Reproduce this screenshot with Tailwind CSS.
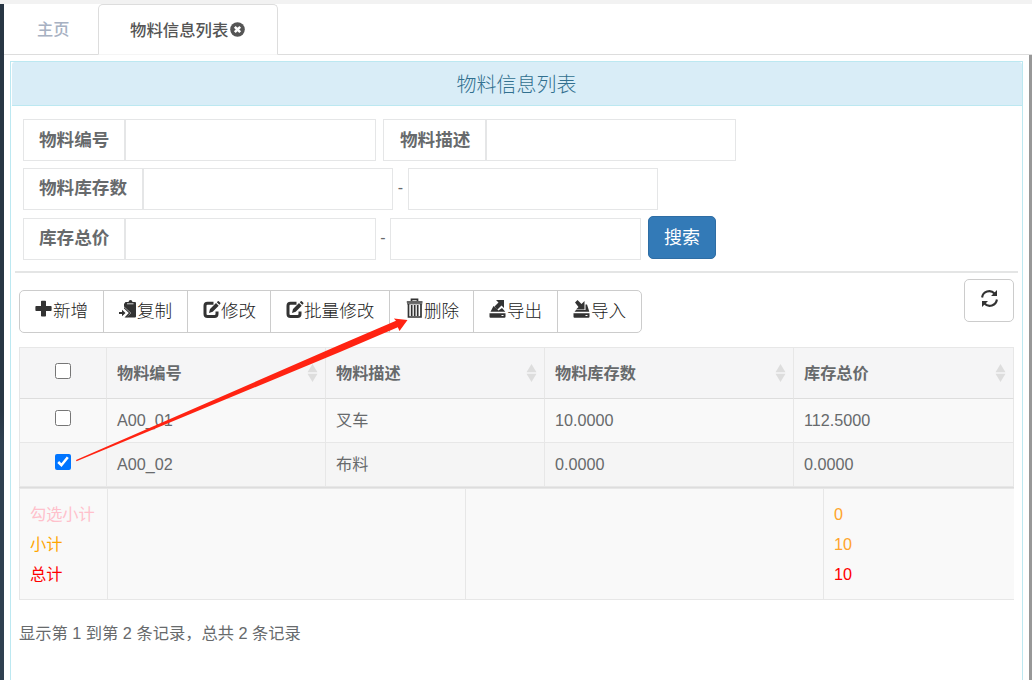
<!DOCTYPE html>
<html lang="zh-CN">
<head>
<meta charset="utf-8">
<title>物料信息列表</title>
<script src="https://cdn.jsdelivr.net/npm/@tailwindcss/browser@4"></script>
</head>
<body class="h-[680px] w-[1032px] overflow-hidden bg-white font-['Liberation_Sans','Noto_Sans_CJK_SC',sans-serif] text-[16.2px] text-[#676a6c]">
<div class="relative flex h-full flex-col">
  <div class="h-1 shrink-0 bg-[#f2f2f2]"></div>
  <div class="flex min-h-0 grow">
    <div class="w-1 shrink-0 bg-linear-to-b from-[#283644] from-60% to-[#2f4050] to-65%"></div>
    <div class="flex min-w-0 grow flex-col">
      <nav class="flex h-[51px] shrink-0 leading-[50px]">
        <div class="w-[94px] border-b border-[#ddd] pl-[33px] font-medium text-[#a7b1c2]">主页</div>
        <div class="flex w-[180px] items-center rounded-t-[5px] border border-[#ddd] border-b-[#f5f5f5] pl-[31px] text-[16.4px] leading-[48px] font-medium text-[#555]">物料信息列表
          <svg class="-mt-px ml-0.5 size-[15px]" viewBox="0 0 15 15"><circle cx="7.5" cy="7.5" r="7.3" fill="#555"/><path d="M4.8 4.8l5.4 5.4M10.2 4.8l-5.4 5.4" stroke="#fff" stroke-width="2.5"/></svg>
        </div>
        <div class="grow border-b border-[#ddd]"></div>
      </nav>
      <div class="flex min-h-0 grow justify-between pl-1.5">
        <main class="mt-1.5 w-[1013px] border border-b-0 border-[#bce8f1] pl-px">
          <h1 class="h-11 rounded-t-[3px] border-b border-[#bce8f1] bg-[#d9edf7] pt-0.5 pr-px text-center text-[20px] leading-[43px] font-light text-[#31708f]">物料信息列表</h1>

          <form class="h-[165px] pt-[13px] pl-[11px] text-[17.6px] leading-[40px]">
            <div class="flex h-[49px]">
              <label class="h-[42px] w-[102px] border border-[#e5e6e7] pl-[15px] font-bold">物料编号</label>
              <input class="h-[42px] w-[251px] border border-[#e5e6e7]">
              <label class="ml-[7px] h-[42px] w-[103px] border border-[#e5e6e7] pl-4 font-bold">物料描述</label>
              <input class="h-[42px] w-[250px] border border-[#e5e6e7]">
            </div>
            <div class="flex h-[50px]">
              <label class="h-[42px] w-[120px] border border-[#e5e6e7] pl-[15px] leading-[38px] font-bold">物料库存数</label>
              <input class="h-[42px] w-[250px] border border-[#e5e6e7]">
              <span class="w-[15px] text-center text-[16px]">-</span>
              <input class="h-[42px] w-[250px] border border-[#e5e6e7]">
            </div>
            <div class="flex">
              <label class="h-[42px] w-[102px] border border-[#e5e6e7] pl-[15px] leading-[38px] font-bold">库存总价</label>
              <input class="h-[42px] w-[251px] border border-[#e5e6e7]">
              <span class="w-[14px] text-center text-[16px]">-</span>
              <input class="h-[42px] w-[251px] border border-[#e5e6e7]">
              <button type="button" class="-mt-0.5 ml-[7px] h-[43px] w-[68px] rounded-[5px] border border-[#2e6da4] bg-[#337ab7] text-[18px] text-white">搜索</button>
            </div>
          </form>
          <div class="mr-1 ml-[3px] h-0.5 bg-[#e4e5e5]"></div>

          <div class="flex justify-between pr-2 pl-[7px]">
            <div class="mt-[17px] flex h-[43px] w-[623px] rounded-[5px] border border-[#ccc] text-[17.6px] leading-[38px] font-light text-[#222] *:flex *:items-center *:border-[#ccc] *:pb-0.5 *:whitespace-nowrap [&_svg]:h-5 [&_svg]:w-[18px] [&_svg]:shrink-0">
              <button class="w-[84px] border-r pl-[15px]"><svg viewBox="0 0 18 20" class="-mt-1" fill="#333"><path d="M6 2.500q0-.8.800-.8h3.400q.8 0 .8.800V7h4.800q.8 0 .8.800v3.400q0 .8-.8.800H11v4.700q0 .8-.8.800H6.800q-.8 0-.8-.8V12H1.200q-.8 0-.8-.8V7.800q0-.8.800-.8H6z"/></svg>新增</button>
              <button class="w-[84px] border-r pl-[15px]"><svg viewBox="0 0 18 20" class="-mt-1" fill="#333"><path d="M8 3h1.500Q9.800 1 11.500 1t2 2H16q1 0 1 1v13.500q0 1-1 1H7.500L12 14 5 7.500V5L6.500 3z"/><path d="M8 4.800h6.500" stroke="#fff" stroke-width=".8"/><path d="M0 13h3V10.800L6.500 14 3 17.200v-2.200H0z"/><path d="M5 8.500l6 5.500-4.500 4.500" fill="none" stroke="#fff"/><path d="M5 9.500l4.800 4.500-4.300 4.500h2.500L11.500 14 5 8z"/></svg>复制</button>
              <button class="w-[83px] border-r pl-[15px]"><svg viewBox="0 0 18 20" class="-mt-0.5"><path d="M10.500 3.200H4.500Q2 3.200 2 5.700V14q0 2.500 2.500 2.500h7Q14 16.500 14 14v-2.500" fill="none" stroke="#333" stroke-width="3"/><path d="M6 13l1-4 6-6 2.700 2.700-6 6zM13.800 2.200l1-1q.5-.5 1 0l1.500 1.500q.5.500 0 1l-1 1z" fill="#333"/></svg>修改</button>
              <button class="w-[119px] border-r pl-[15px]"><svg viewBox="0 0 18 20" class="-mt-0.5"><path d="M10.500 3.200H4.500Q2 3.200 2 5.700V14q0 2.500 2.500 2.500h7Q14 16.500 14 14v-2.500" fill="none" stroke="#333" stroke-width="3"/><path d="M6 13l1-4 6-6 2.700 2.700-6 6zM13.800 2.200l1-1q.5-.5 1 0l1.500 1.500q.5.500 0 1l-1 1z" fill="#333"/></svg>批量修改</button>
              <button class="w-[84px] border-r pl-[16px]"><svg viewBox="0 0 18 20" class="-mt-1.5"><path d="M5.500 3V1.300h6V3M.8 4h15.700M2.500 6v13h12.500V6M5.700 7v11M8.700 7v11M11.700 7v11" fill="none" stroke="#333" stroke-width="1.700"/><path d="M1 5.800h15.300" stroke="#333"/></svg>删除</button>
              <button class="w-[84px] border-r pl-[15px]"><svg viewBox="0 0 18 20" class="-mt-1" fill="#333"><path d="M7 1h8v8l-2.500-2.500-4 4-3-3 4-4zM4.500 7l5 4.500 3.500-2.500 3.300 3.800H1.500zM.5 14.300h16v3.500q0 .9-1 .9h-14q-1 0-1-.9z"/><path d="M12.500 16.500h2" stroke="#fff"/></svg>导出</button>
              <button class="w-[83px] pl-[15px]"><svg viewBox="0 0 18 20" class="-mt-1" fill="#333"><path d="M2 3.500L4.500 1l4 4L11.500 2v8.500H3L5.500 8zM12.500 5.500h1.500l2.300 7.300H1.500L3 11h9.500zM.5 14.300h16v3.500q0 .9-1 .9h-14q-1 0-1-.9z"/><path d="M12.500 16.500h2" stroke="#fff"/></svg>导入</button>
            </div>
            <button class="mt-1.5 flex h-[43px] w-[50px] justify-center rounded-[5px] border border-[#ccc] pt-[9px]">
              <svg class="size-[19px]" viewBox="0 0 19 19"><path d="M2.100 8.500A7.200 7.200 0 0 1 14.500 4.500M16.900 10.500A7.200 7.200 0 0 1 4.500 14.500" fill="none" stroke="#333" stroke-width="2.100"/><path d="M17 1v6h-6zM2 18v-6h6z" fill="#333"/></svg>
            </button>
          </div>

          <section class="mt-[14px] ml-[7px] w-[995px]">
            <table class="w-[995px] table-fixed border-separate border-spacing-0 border-t border-l border-[#e7e7e7] text-left [&_td]:border-r [&_td]:border-b [&_td]:border-[#e7e7e7] [&_td]:pl-2.5 [&_th]:border-r [&_th]:border-b [&_th]:border-r-[#e7e7e7] [&_th]:border-b-[#ddd] [&_th]:pl-2.5">
              <colgroup><col class="w-[87px]"><col class="w-[219px]"><col class="w-[219px]"><col class="w-[249px]"><col></colgroup>
              <thead>
                <tr class="h-[51px] bg-[#f5f5f6]">
                  <th><input type="checkbox" class="mt-[-5px] ml-[25px] block size-4"></th>
                  <th><div class="flex items-center justify-between pr-[7px]">物料编号<svg class="h-5 w-[11px]" viewBox="0 0 11 20" fill="#ddd"><path d="M5.500 1l5 8.300h-10zM.5 10.700h10l-5 8.300z"/></svg></div></th>
                  <th><div class="flex items-center justify-between pr-[7px]">物料描述<svg class="h-5 w-[11px]" viewBox="0 0 11 20" fill="#ddd"><path d="M5.500 1l5 8.300h-10zM.5 10.700h10l-5 8.300z"/></svg></div></th>
                  <th><div class="flex items-center justify-between pr-[7px]">物料库存数<svg class="h-5 w-[11px]" viewBox="0 0 11 20" fill="#ddd"><path d="M5.500 1l5 8.300h-10zM.5 10.700h10l-5 8.300z"/></svg></div></th>
                  <th><div class="flex items-center justify-between pr-[7px]">库存总价<svg class="h-5 w-[11px]" viewBox="0 0 11 20" fill="#ddd"><path d="M5.500 1l5 8.300h-10zM.5 10.700h10l-5 8.300z"/></svg></div></th>
                </tr>
              </thead>
              <tbody>
                <tr class="h-11 bg-[#f9f9f9]"><td><input type="checkbox" class="mt-[-5px] ml-[25px] block size-4"></td><td>A00_01</td><td>叉车</td><td>10.0000</td><td>112.5000</td></tr>
                <tr class="h-11 bg-[#f5f5f5]"><td><input type="checkbox" checked class="mt-[-5px] ml-[25px] block size-4"></td><td>A00_02</td><td>布料</td><td>0.0000</td><td>0.0000</td></tr>
              </tbody>
            </table>
            <div class="h-px bg-[#ddd]"></div>
            <div class="flex h-[112px] border-y border-l border-[#e7e7e7] bg-[#f9f9f9] leading-[30px] *:pt-2.5 *:pl-2.5">
              <div class="w-[88px] border-r border-[#e7e7e7] whitespace-nowrap"><p class="text-[pink]">勾选小计</p><p class="text-[orange]">小计</p><p class="text-[red]">总计</p></div>
              <div class="w-[358px] border-r border-[#e7e7e7]"></div>
              <div class="w-[358px] border-r border-[#e7e7e7]"></div>
              <div><p class="text-[#ffa42c]">0</p><p class="text-[#ffa42c]">10</p><p class="text-[red]">10</p></div>
            </div>
            <p class="mt-[21px] text-[16.25px] leading-6">显示第 1 到第 2 条记录，总共 2 条记录</p>
          </section>
        </main>
        <div class="w-[3px] bg-[#989898]"></div>
      </div>
    </div>
  </div>
  <svg class="absolute inset-0 h-[680px] w-[1032px]" viewBox="0 0 1032 680"><path d="M76 460L340 344.800 396 320.800 393.800 318.500 407.500 320 399.500 331 397.800 327.200 340 352 76.500 461.200z" fill="#ff2312"/></svg>
</div>
</body>
</html>
